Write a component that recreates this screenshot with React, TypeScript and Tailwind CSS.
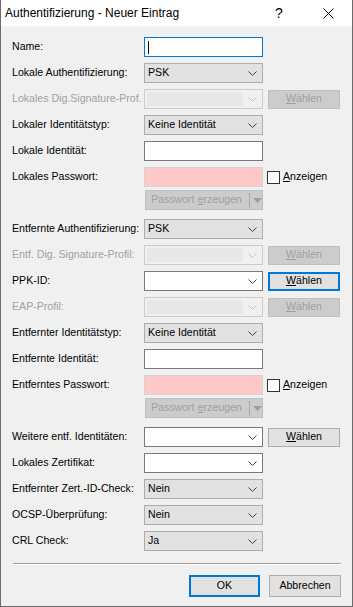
import React from "react";

const FONT = "font-['Liberation_Sans',Arial,sans-serif]";

function Chevron({ disabled }: { disabled?: boolean }) {
  return (
    <svg width="9" height="5" viewBox="0 0 9 5" className="shrink-0">
      <polyline
        points="0.5,0.5 4.5,4.5 8.5,0.5"
        fill="none"
        stroke={disabled ? "#c4c4c4" : "#404040"}
        strokeWidth="1"
      />
    </svg>
  );
}

interface RowProps {
  label: string;
  disabled?: boolean;
  className?: string;
  children?: React.ReactNode;
}

const Row: React.FC<RowProps> = ({ label, disabled, className, children }) => {
  return (
    <div className={"flex items-center h-[20px] " + (className ?? "mt-[6px]")}>
      <div
        className={
          "w-[132px] shrink-0 whitespace-nowrap " +
          (disabled ? "text-[#a0a0a0]" : "text-black")
        }
      >
        {label}
      </div>
      {children}
    </div>
  );
};

function Select({ value, white }: { value?: string; white?: boolean }) {
  return (
    <div
      className={
        "w-[119px] h-[20px] shrink-0 flex items-center justify-between pl-[3px] pr-[5px] border " +
        (white ? "bg-white border-[#7a7a7a]" : "bg-[#e1e1e1] border-[#adadad]")
      }
    >
      <span>{value}</span>
      <Chevron />
    </div>
  );
}

function DisabledSelect() {
  return (
    <div className="w-[119px] h-[20px] shrink-0 flex items-center justify-between pl-[2px] pr-[5px] border border-[#cccccc] bg-[#f0f0f0]">
      <div className="w-[96px] h-[14px] bg-[#e8e8e8]" />
      <Chevron disabled />
    </div>
  );
}

function TextInput({ focused, pink }: { focused?: boolean; pink?: boolean }) {
  return (
    <div
      className={
        "w-[119px] h-[20px] shrink-0 flex items-center pl-[3px] border " +
        (focused
          ? "bg-white border-[#0078d7]"
          : pink
          ? "bg-[#ffc8c8] border-[#d4d4d4]"
          : "bg-white border-[#7a7a7a]")
      }
    >
      {focused && <div className="w-px h-[13px] bg-black" />}
    </div>
  );
}

function ChooseButton({
  disabled,
  focused,
}: {
  disabled?: boolean;
  focused?: boolean;
}) {
  return (
    <div
      className={
        "ml-[5px] w-[72px] h-[19px] shrink-0 flex items-center justify-center " +
        (disabled
          ? "bg-[#cccccc] border border-[#bfbfbf] text-[#a0a0a0]"
          : focused
          ? "bg-[#e1e1e1] border-2 border-[#0078d7] text-black"
          : "bg-[#e1e1e1] border border-[#adadad] text-black")
      }
    >
      <span>
        <u>W</u>ählen
      </span>
    </div>
  );
}

function ShowCheckbox() {
  return (
    <div className="ml-[4px] flex items-center">
      <div className="w-[13px] h-[13px] bg-white border border-[#333333] mt-[1px]" />
      <span className="ml-[3px]">
        <u>A</u>nzeigen
      </span>
    </div>
  );
}

function GenerateButton() {
  return (
    <div className="flex h-[20px] mt-[3px]">
      <div className="w-[132px] shrink-0" />
      <div className="ml-px w-[118px] h-[20px] flex items-center bg-[#cccccc] border border-[#bfbfbf] text-[#a0a0a0]">
        <span className="pl-[5px] w-[103px]">
          Passwort <u>e</u>rzeugen
        </span>
        <div className="w-px h-[15px] bg-[#a8a8a8]" />
        <svg width="9" height="5" viewBox="0 0 9 5" className="ml-[3px]">
          <polygon points="0,0 9,0 4.5,5" fill="#a0a0a0" />
        </svg>
      </div>
    </div>
  );
}

export default function App() {
  return (
    <div
      className={
        FONT +
        " w-[353px] h-[607px] flex flex-col bg-[#f0f0f0] border-x border-b border-[#6b6b6b] text-[10.6px] overflow-hidden"
      }
    >
      {/* title bar */}
      <div className="h-[26px] shrink-0 bg-white flex items-center pl-[4px] text-[12px] text-black">
        <span className="flex-1">Authentifizierung - Neuer Eintrag</span>
        <span className="text-[14px] w-[10px] mr-[38px]">?</span>
        <svg width="11" height="11" viewBox="0 0 11 11" className="mr-[18px]">
          <path d="M0.5 0.5 L10.5 10.5 M10.5 0.5 L0.5 10.5" stroke="#000" strokeWidth="1" />
        </svg>
      </div>

      {/* form */}
      <div className="flex-1 flex flex-col pl-[11px]">
        <Row label="Name:" className="mt-[11px]">
          <TextInput focused />
        </Row>
        <Row label="Lokale Authentifizierung:">
          <Select value="PSK" />
        </Row>
        <Row label="Lokales Dig.Signature-Prof." disabled>
          <DisabledSelect />
          <ChooseButton disabled />
        </Row>
        <Row label="Lokaler Identitätstyp:">
          <Select value="Keine Identität" />
        </Row>
        <Row label="Lokale Identität:">
          <TextInput />
        </Row>
        <Row label="Lokales Passwort:">
          <TextInput pink />
          <ShowCheckbox />
        </Row>
        <GenerateButton />

        <Row label="Entfernte Authentifizierung:" className="mt-[9px]">
          <Select value="PSK" />
        </Row>
        <Row label="Entf. Dig. Signature-Profil:" disabled>
          <DisabledSelect />
          <ChooseButton disabled />
        </Row>
        <Row label="PPK-ID:">
          <Select white />
          <ChooseButton focused />
        </Row>
        <Row label="EAP-Profil:" disabled>
          <DisabledSelect />
          <ChooseButton disabled />
        </Row>
        <Row label="Entfernter Identitätstyp:">
          <Select value="Keine Identität" />
        </Row>
        <Row label="Entfernte Identität:">
          <TextInput />
        </Row>
        <Row label="Entferntes Passwort:">
          <TextInput pink />
          <ShowCheckbox />
        </Row>
        <GenerateButton />

        <Row label="Weitere entf. Identitäten:" className="mt-[9px]">
          <Select white />
          <ChooseButton />
        </Row>
        <Row label="Lokales Zertifikat:">
          <Select white />
        </Row>
        <Row label="Entfernter Zert.-ID-Check:">
          <Select value="Nein" />
        </Row>
        <Row label="OCSP-Überprüfung:">
          <Select value="Nein" />
        </Row>
        <Row label="CRL Check:">
          <Select value="Ja" />
        </Row>

        {/* separator */}
        <div className="mt-[12px] mr-[11px] ml-px h-px bg-[#a0a0a0] border-b border-white box-content" />

        {/* footer buttons */}
        <div className="flex justify-end mt-[10px] mr-[11px]">
          <div className="w-[71px] h-[22px] flex items-center justify-center bg-[#e1e1e1] border-2 border-[#0078d7]">
            OK
          </div>
          <div className="ml-[9px] w-[72px] h-[22px] flex items-center justify-center bg-[#e1e1e1] border border-[#adadad]">
            Abbrechen
          </div>
        </div>
      </div>
    </div>
  );
}
